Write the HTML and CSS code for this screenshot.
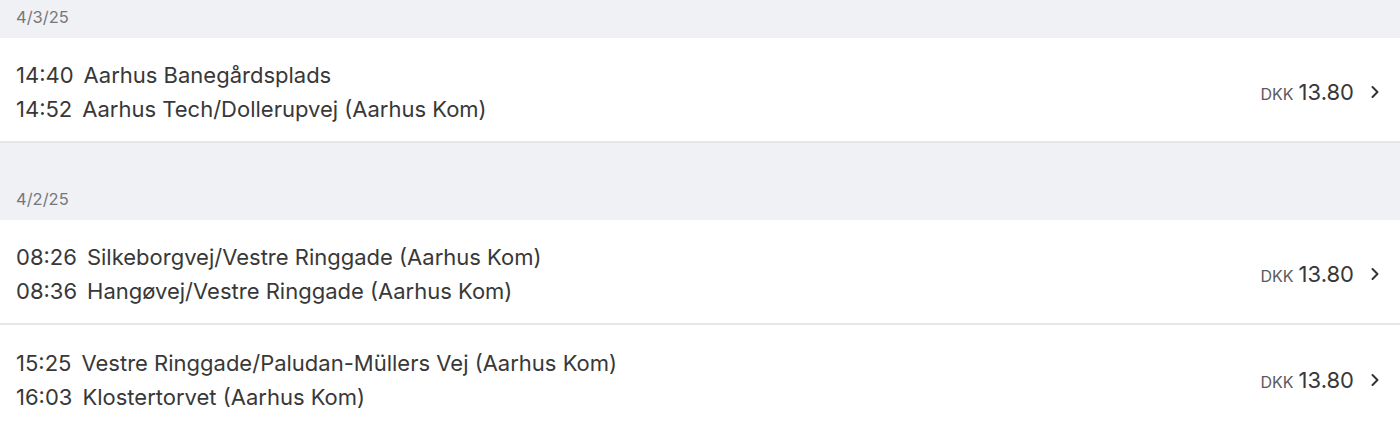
FILE: index.html
```html
<!DOCTYPE html>
<html>
<head>
<meta charset="utf-8">
<link rel="stylesheet" href="styles.css">
</head>
<body>
<div class="list">
  <div class="date first">4/3/25</div>
  <div class="trip">
    <div class="stops">
      <div class="stop"><span class="time">14:40</span><span class="name">Aarhus Banegårdsplads</span></div>
      <div class="stop"><span class="time">14:52</span><span class="name">Aarhus Tech/Dollerupvej (Aarhus Kom)</span></div>
    </div>
    <div class="price"><span class="cur">DKK</span><span class="amt">13.80</span>
      <svg class="chev" width="10" height="14" viewBox="0 0 10 14"><path d="M2.5 2 L7.5 7 L2.5 12" fill="none" stroke="#333" stroke-width="2" stroke-linecap="round" stroke-linejoin="round"/></svg>
    </div>
  </div>
  <div class="date">4/2/25</div>
  <div class="trip">
    <div class="stops">
      <div class="stop"><span class="time">08:26</span><span class="name">Silkeborgvej/Vestre Ringgade (Aarhus Kom)</span></div>
      <div class="stop"><span class="time">08:36</span><span class="name">Hangøvej/Vestre Ringgade (Aarhus Kom)</span></div>
    </div>
    <div class="price"><span class="cur">DKK</span><span class="amt">13.80</span>
      <svg class="chev" width="10" height="14" viewBox="0 0 10 14"><path d="M2.5 2 L7.5 7 L2.5 12" fill="none" stroke="#333" stroke-width="2" stroke-linecap="round" stroke-linejoin="round"/></svg>
    </div>
  </div>
  <div class="trip">
    <div class="stops">
      <div class="stop"><span class="time">15:25</span><span class="name">Vestre Ringgade/Paludan-Müllers Vej (Aarhus Kom)</span></div>
      <div class="stop"><span class="time">16:03</span><span class="name">Klostertorvet (Aarhus Kom)</span></div>
    </div>
    <div class="price"><span class="cur">DKK</span><span class="amt">13.80</span>
      <svg class="chev" width="10" height="14" viewBox="0 0 10 14"><path d="M2.5 2 L7.5 7 L2.5 12" fill="none" stroke="#333" stroke-width="2" stroke-linecap="round" stroke-linejoin="round"/></svg>
    </div>
  </div>
</div>
</body>
</html>
```
FILE: styles.css
```css
html, body {
  margin: 0;
  padding: 0;
  background: #ffffff;
}
body {
  font-family: "Inter", "Noto Sans", sans-serif;
  color: #383838;
}
.list {
  display: flex;
  flex-direction: column;
}
.date {
  background: #f0f1f5;
  color: #77777b;
  font-size: 16.5px;
  padding: 0 16px;
  height: 77px;
  box-sizing: border-box;
  display: flex;
  align-items: flex-end;
  padding-bottom: 11px;
}
.date.first {
  height: 38px;
  align-items: center;
  padding-top: 0;
  padding-bottom: 5px;
}
.trip {
  display: flex;
  align-items: center;
  justify-content: space-between;
  height: 105px;
  box-sizing: border-box;
  padding: 4px 20px 0 16px;
  border-bottom: 2px solid #e6e6e9;
}
.trip:last-child {
  border-bottom: none;
}
.stops {
  display: flex;
  flex-direction: column;
  gap: 8px;
}
.stop {
  display: flex;
  gap: 10px;
  font-size: 22px;
  line-height: 26px;
  font-weight: 400;
}
.price {
  display: flex;
  align-items: center;
  gap: 5px;
}
.cur {
  font-size: 16px;
  color: #5a5a5a;
  padding-top: 4px;
}
.amt {
  font-size: 22px;
  color: #383838;
  margin-right: 11px;
}
.chev {
  display: block;
}
```
